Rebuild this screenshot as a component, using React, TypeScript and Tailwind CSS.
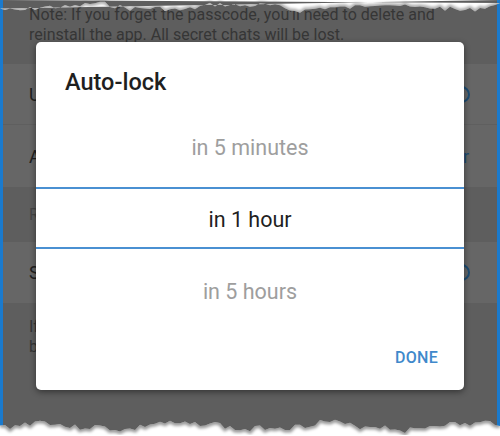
import React from 'react';

// torn paper edge, seeded so every run draws the same line
function tornEdge(seed: number, base: number, amp: number) {
  let s = seed;
  const rnd = () => {
    s = (s * 9301 + 49297) % 233280;
    return s / 233280;
  };
  const pts: [number, number][] = [];
  for (let x = 0; x <= 504; x += 5) {
    const wave = Math.sin(x / 23 + seed) * amp * 0.5 + Math.sin(x / 9) * amp * 0.25;
    pts.push([x, base + wave + (rnd() - 0.5) * amp]);
  }
  return pts;
}

function TornTop() {
  const pts = tornEdge(7, 7, 5);
  const line = pts.map(([x, y]) => `${x},${y.toFixed(1)}`).join(' L');
  const fill = `M0,0 L500,0 L${line} Z`;
  return (
    <svg className="absolute left-0 top-0" width="500" height="20" viewBox="0 0 500 20">
      <defs>
        <clipPath id="topClip">
          <path d={fill} />
        </clipPath>
        <filter id="topBlur">
          <feGaussianBlur stdDeviation="1.4" />
        </filter>
      </defs>
      <path d={fill} fill="#ffffff" />
      <path d={`M${line}`} fill="none" stroke="#000" strokeOpacity="0.35" strokeWidth="4" filter="url(#topBlur)" clipPath="url(#topClip)" />
    </svg>
  );
}

function TornBottom() {
  const pts = tornEdge(3, 10, 6);
  const line = pts.map(([x, y]) => `${x},${y.toFixed(1)}`).join(' L');
  const fill = `M${line} L500,20 L0,20 Z`;
  return (
    <svg className="absolute left-0 bottom-0" width="500" height="20" viewBox="0 0 500 20">
      <defs>
        <clipPath id="botClip">
          <path d={fill} />
        </clipPath>
        <filter id="botBlur">
          <feGaussianBlur stdDeviation="1.6" />
        </filter>
      </defs>
      <path d={fill} fill="#ffffff" />
      <path d={`M${line}`} fill="none" stroke="#000" strokeOpacity="0.4" strokeWidth="5" filter="url(#botBlur)" clipPath="url(#botClip)" />
    </svg>
  );
}

function Toggle() {
  return <div className="w-[17px] h-[17px] rounded-full border-2 border-[#1d4c73]" />;
}

export default function App() {
  return (
    <div className="relative w-[500px] h-[436px] overflow-hidden bg-white font-['Roboto',sans-serif]">
      {/* dimmed settings screen */}
      <div className="flex flex-col h-full bg-[#5e5e5e] border-x-[3px] border-[#1a7acd]">
        <div className="pt-[5px] pb-[19px] pl-[26px] text-[16px] leading-[20px] text-[#363636] whitespace-nowrap">
          <div>Note: If you forget the passcode, you'll need to delete and</div>
          <div>reinstall the app. All secret chats will be lost.</div>
        </div>
        <div className="h-[61px] flex items-center justify-between pl-[26px] pr-[27px] bg-[#666666] border-b border-[#5f5f5f]">
          <span className="text-[18px] text-[#202020]">Unlock with Fingerprint</span>
          <Toggle />
        </div>
        <div className="h-[62px] flex items-center justify-between pl-[26px] pr-[28px] bg-[#666666]">
          <span className="text-[18px] text-[#202020]">Auto-lock</span>
          <span className="text-[18px] text-[#1d4c73]">in 1 hour</span>
        </div>
        <div className="h-[55px] flex items-center pl-[26px]">
          <span className="text-[16px] text-[#464646]">Require passcode if away for a time.</span>
        </div>
        <div className="h-[61px] flex items-center justify-between pl-[26px] pr-[27px] bg-[#666666]">
          <span className="text-[18px] text-[#202020]">Show App Content in Task Switch</span>
          <Toggle />
        </div>
        <div className="pt-[14px] pl-[26px] text-[16px] leading-[20px] text-[#363636] whitespace-nowrap">
          <div>If you hide the app content, it won't be shown in the task</div>
          <div>bar. Screenshots won't be available.</div>
        </div>
      </div>

      <TornTop />
      <TornBottom />

      {/* picker dialog */}
      <div className="absolute left-[36px] top-[42px] w-[428px] h-[348px] flex flex-col bg-white rounded-[5px] shadow-[0_2px_6px_rgba(0,0,0,0.45)]">
        <div className="h-[80px] pt-[26px] pl-[29px] text-[23.5px] leading-[28px] font-medium text-[#1f1f1f]">
          Auto-lock
        </div>
        <div className="h-[65px] pt-[14px] text-center text-[21.5px] leading-[24px] text-[#9e9e9e]">
          in 5 minutes
        </div>
        <div className="h-[62px] flex items-center justify-center pt-[3px] border-y-2 border-[#4a90d2] text-[21.5px] leading-[24px] text-[#1f1f1f]">
          in 1 hour
        </div>
        <div className="h-[81px] pt-[31px] text-center text-[21.5px] leading-[24px] text-[#9e9e9e]">
          in 5 hours
        </div>
        <div className="h-[60px] flex justify-end pt-[18px] pr-[26px]">
          <span className="text-[16px] leading-[20px] font-medium tracking-[0.3px] text-[#3f89cb]">DONE</span>
        </div>
      </div>
    </div>
  );
}
